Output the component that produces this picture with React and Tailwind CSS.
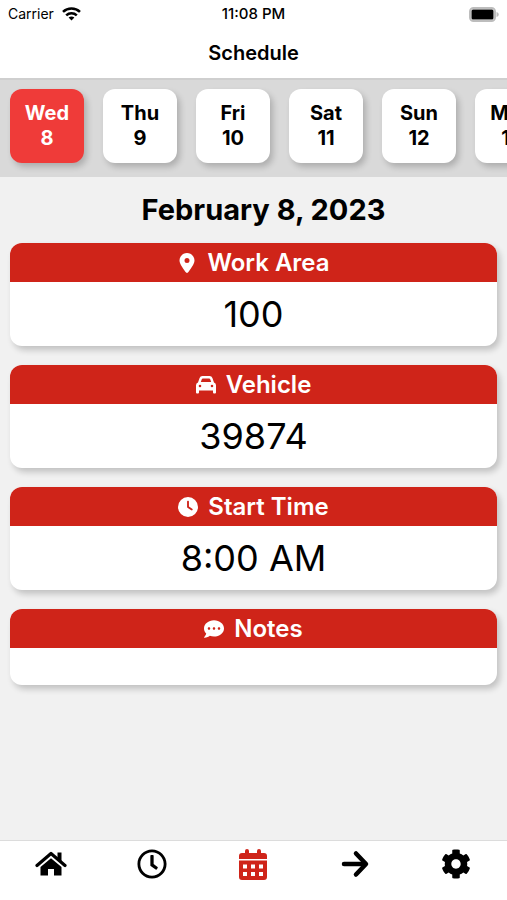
import React, { useState } from 'react';
import { FaRegClock, FaCommentDots, FaCog } from 'react-icons/fa';
import { FaLocationDot, FaClock } from 'react-icons/fa6';

const days = [
    { name: 'Wed', date: 8 },
    { name: 'Thu', date: 9 },
    { name: 'Fri', date: 10 },
    { name: 'Sat', date: 11 },
    { name: 'Sun', date: 12 },
    { name: 'Mon', date: 13 },
];

const HomeIcon = () => (
    <svg width="32" height="30" viewBox="0 0 32 30" aria-hidden="true">
        <path d="M2 16.5L16 4.5l14 12" fill="none" stroke="currentColor" strokeWidth="3.2" strokeLinecap="round" strokeLinejoin="round" />
        <path d="M22.5 3.5h4V13l-4-3.4z" fill="currentColor" />
        <path d="M16 9.2L5.5 18v8.5H13v-6.5h6v6.5h7.5V18z" fill="currentColor" />
    </svg>
);

const CalendarIcon = () => (
    <svg width="30" height="31" viewBox="0 0 30 31" fill="currentColor" aria-hidden="true">
        <path d="M4 4h3V2a2 2 0 0 1 4 0v2h8V2a2 2 0 0 1 4 0v2h3a3 3 0 0 1 3 3v3H1V7a3 3 0 0 1 3-3z" />
        <path
            fillRule="evenodd"
            d="M1 11.5h28V28a3 3 0 0 1-3 3H4a3 3 0 0 1-3-3zM5 15.5v4h4v-4zM13 15.5v4h4v-4zM21 15.5v4h4v-4zM5 23v4h4v-4zM13 23v4h4v-4zM21 23v4h4v-4z"
        />
    </svg>
);

const ArrowIcon = () => (
    <svg width="30" height="30" viewBox="0 0 30 30" fill="none" stroke="currentColor" strokeWidth="4.5" strokeLinecap="round" aria-hidden="true">
        <path d="M4 15h21" />
        <path d="M16 4.5L26 15 16 25.5" strokeLinejoin="round" />
    </svg>
);

const SettingsIcon = () => <FaCog size={30} />;

const ClockIcon = () => <FaRegClock size={30} />;

const CarIcon = ({ size }) => (
    <svg width={size} height={size} viewBox="0 0 20 20" aria-hidden="true">
        <path
            fill="currentColor"
            fillRule="evenodd"
            d="M2 7.5L3.6 3A3 3 0 0 1 6.4 1h7.2a3 3 0 0 1 2.8 2L18 7.5a3 3 0 0 1 2 2.8V17.5a1 1 0 0 1-1 1h-1a1 1 0 0 1-1-1V15.5H3v2a1 1 0 0 1-1 1H1a1 1 0 0 1-1-1V10.3a3 3 0 0 1 2-2.8zM4.8 7h10.4l-1.1-3a1 1 0 0 0-.9-.6H6.8a1 1 0 0 0-.9.6zM5.3 11a1.3 1.3 0 1 0-2.6 0a1.3 1.3 0 0 0 2.6 0zM17.3 11a1.3 1.3 0 1 0-2.6 0a1.3 1.3 0 0 0 2.6 0z"
        />
    </svg>
);

const WifiIcon = () => (
    <svg width="19" height="14" viewBox="0 0 19 14" fill="none" stroke="currentColor" strokeWidth="2.6" aria-hidden="true">
        <path d="M1 4.9C5.8.4 13.2.4 18 4.9" />
        <path d="M4.2 8.4c3-2.8 7.6-2.8 10.6 0" />
        <path d="M9.5 13.5L6.6 10.6c1.7-1.4 4.1-1.4 5.8 0z" fill="currentColor" stroke="none" />
    </svg>
);

const BatteryIcon = () => (
    <svg width="30" height="15" viewBox="0 0 30 15" aria-hidden="true">
        <rect x="1" y="1" width="25" height="13" rx="3.5" fill="#fff" stroke="#bdbdbd" strokeWidth="2" />
        <rect x="2.5" y="2.5" width="22" height="10" rx="1.5" fill="#000" />
        <path d="M27.5 5v5c3-1.2 3-3.8 0-5z" fill="#bdbdbd" />
    </svg>
);

const details = [
    { title: 'Work Area', icon: FaLocationDot, value: '100' },
    { title: 'Vehicle', icon: CarIcon, value: '39874' },
    { title: 'Start Time', icon: FaClock, value: '8:00 AM' },
    { title: 'Notes', icon: FaCommentDots, value: '' },
];

const tabs = [
    { label: 'Home', icon: HomeIcon },
    { label: 'Clock', icon: ClockIcon },
    { label: 'Schedule', icon: CalendarIcon, active: true },
    { label: 'Next', icon: ArrowIcon },
    { label: 'Settings', icon: SettingsIcon },
];

const StatusBar = () => (
    <div className="grid grid-cols-3 items-center h-7 px-2 text-sm">
        <div className="flex items-center gap-2">
            <span>Carrier</span>
            <WifiIcon />
        </div>
        <div className="text-center text-[15px] font-medium">11:08 PM</div>
        <div className="flex justify-end">
            <BatteryIcon />
        </div>
    </div>
);

const DayButton = ({ day, selected, onClick }) => (
    <button
        type="button"
        onClick={onClick}
        className={`w-[74px] h-[74px] shrink-0 rounded-xl text-xl leading-[25px] font-bold shadow-[3px_4px_6px_rgba(0,0,0,0.2)] ${selected ? 'bg-[#ef3b39] text-white' : 'bg-white text-black'}`}
    >
        <span className="block">{day.name}</span>
        <span className="block">{day.date}</span>
    </button>
);

const DetailCard = ({ title, icon: Icon, value }) => (
    <section className="rounded-xl bg-white shadow-[3px_4px_6px_rgba(0,0,0,0.2)]">
        <h3 className="flex items-center justify-center gap-2.5 h-[39px] rounded-t-xl bg-[#cf2419] text-white text-2xl font-semibold">
            <Icon size={20} />
            {title}
        </h3>
        {value ? (
            <p className="h-16 text-center text-4xl leading-[64px]">{value}</p>
        ) : (
            <div className="h-[37px]" />
        )}
    </section>
);

const App = () => {
    const [selected, setSelected] = useState(8);

    return (
        <div className="flex flex-col min-h-screen bg-[#f1f1f1] text-black font-['Inter',sans-serif]">
            <header className="bg-white border-b-2 border-[#cfcfcf]">
                <StatusBar />
                <h1 className="h-[50px] text-center text-xl leading-[50px] font-semibold">Schedule</h1>
            </header>

            <div className="flex gap-[19px] overflow-x-auto [scrollbar-width:none] bg-[#d9d9d9] pl-2.5 pt-[9px] pb-[14px]">
                {days.map(day => (
                    <DayButton
                        key={day.date}
                        day={day}
                        selected={day.date === selected}
                        onClick={() => setSelected(day.date)}
                    />
                ))}
            </div>

            <main className="flex-1 px-2.5">
                <h2 className="pl-5 text-center text-[29px] leading-[66px] font-bold">February {selected}, 2023</h2>
                <div className="flex flex-col gap-[19px]">
                    {details.map(item => (
                        <DetailCard key={item.title} {...item} />
                    ))}
                </div>
            </main>

            <nav className="grid grid-cols-5 h-[60px] bg-white border-t border-[#dcdcdc]">
                {tabs.map(({ label, icon: Icon, active }) => (
                    <a
                        key={label}
                        href="#"
                        aria-label={label}
                        className={`flex items-center justify-center h-[46px] ${active ? 'text-[#cf2419]' : 'text-black'}`}
                    >
                        <Icon />
                    </a>
                ))}
            </nav>
        </div>
    );
};

export default App;
